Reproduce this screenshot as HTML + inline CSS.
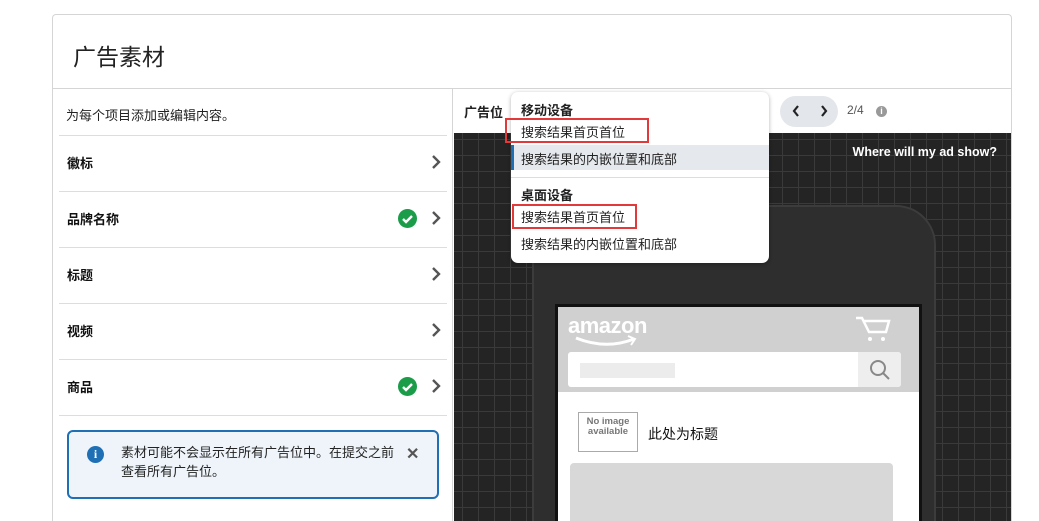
<!DOCTYPE html>
<html><head><meta charset="utf-8"><style>
*{margin:0;padding:0;box-sizing:border-box}
html,body{width:1039px;height:521px;overflow:hidden}
body{background:#fff;font-family:"Liberation Sans","Noto Sans CJK SC",sans-serif;position:relative;color:#111}
.card{position:absolute;left:52px;top:14px;width:960px;height:507px;background:#fff;border:1px solid #d5d5d5;border-bottom:none;border-radius:4px 4px 0 0;overflow:hidden}
.hdr{position:absolute;left:0;top:0;width:958px;height:74px;border-bottom:1px solid #d5d5d5}
.hdr span{position:absolute;left:20px;top:23px;font-size:23px;color:#222}
.lp{position:absolute;left:0;top:74px;width:400px;height:450px;border-right:1px solid #d5d5d5}
.abs{position:absolute}
.row{position:absolute;left:6px;width:388px;height:56px;border-top:1px solid #ddd}
.row b{position:absolute;left:8px;top:17px;font-size:13px}
.chev{position:absolute;right:6px;top:18px}
.ok{position:absolute;right:30px;top:17px;width:19px;height:19px;border-radius:50%;background:#1a9c48}
.rp{position:absolute;left:401px;top:74px;width:557px;height:450px}
.dark{position:absolute;left:0;top:44px;width:557px;height:410px;background-color:#242424;background-image:linear-gradient(#3a3a3a 1px,transparent 1px),linear-gradient(90deg,#3a3a3a 1px,transparent 1px);background-size:16px 16px;background-position:8px 6px;overflow:hidden}
.menu{position:absolute;left:511px;top:92px;width:258px;height:171px;background:#fff;border-radius:7px;box-shadow:0 1px 4px rgba(0,0,0,.3);font-size:13px}
.menu div{position:absolute;left:10px}
.red{position:absolute;border:2px solid #e23a3a}
</style></head><body>
<div class="card">
 <div class="hdr"><span>广告素材</span></div>
 <div class="lp">
  <div class="abs" style="left:13px;top:16px;font-size:13px;color:#222">为每个项目添加或编辑内容。</div>
  <div class="row" style="top:46px"><b>徽标</b><svg class="chev" width="10" height="16"><path d="M2 2l6 6-6 6" stroke="#555" stroke-width="2.4" fill="none"/></svg></div>
  <div class="row" style="top:102px"><b>品牌名称</b><div class="ok"><svg width="19" height="19"><path d="M5 10l3 3 6-6" stroke="#fff" stroke-width="2.4" fill="none"/></svg></div><svg class="chev" width="10" height="16"><path d="M2 2l6 6-6 6" stroke="#555" stroke-width="2.4" fill="none"/></svg></div>
  <div class="row" style="top:158px"><b>标题</b><svg class="chev" width="10" height="16"><path d="M2 2l6 6-6 6" stroke="#555" stroke-width="2.4" fill="none"/></svg></div>
  <div class="row" style="top:214px"><b>视频</b><svg class="chev" width="10" height="16"><path d="M2 2l6 6-6 6" stroke="#555" stroke-width="2.4" fill="none"/></svg></div>
  <div class="row" style="top:270px"><b>商品</b><div class="ok"><svg width="19" height="19"><path d="M5 10l3 3 6-6" stroke="#fff" stroke-width="2.4" fill="none"/></svg></div><svg class="chev" width="10" height="16"><path d="M2 2l6 6-6 6" stroke="#555" stroke-width="2.4" fill="none"/></svg></div>
  <div class="row" style="top:326px;height:1px"></div>
  <div class="abs" style="left:14px;top:341px;width:372px;height:69px;background:#eef4fa;border:2px solid #1f6fb5;border-radius:6px">
   <div class="abs" style="left:18px;top:14px;width:17px;height:17px;border-radius:50%;background:#1f6fb5;color:#fff;font-size:12px;font-weight:bold;text-align:center;line-height:17px;font-family:'Liberation Serif',serif">i</div>
   <div class="abs" style="left:52px;top:11px;width:280px;font-size:13px;line-height:19px;color:#222">素材可能不会显示在所有广告位中。在提交之前查看所有广告位。</div>
   <div class="abs" style="left:337px;top:12px;font-size:16px;color:#555;font-weight:bold">✕</div>
  </div>
 </div>
 <div class="rp">
  <div class="abs" style="left:10px;top:13px;font-size:13px;font-weight:bold;color:#222">广告位</div>
  <div class="abs" style="left:326px;top:7px;width:58px;height:31px;background:#e3e6ea;border-radius:16px"></div>
  <svg class="abs" style="left:337px;top:15px" width="40" height="14"><path d="M7 2l-4 5 4 5M31 2l4 5-4 5" stroke="#222" stroke-width="2.2" fill="none"/></svg>
  <div class="abs" style="left:393px;top:14px;font-size:12px;color:#555">2/4</div>
  <div class="abs" style="left:422px;top:17px;width:11px;height:11px;border-radius:50%;background:#999;color:#fff;font-size:9px;text-align:center;line-height:11px;font-weight:bold">i</div>
  <div class="dark">
   <div class="abs" style="right:14px;top:12px;color:#fff;font-size:12.5px;font-weight:bold">Where will my ad show?</div>
   <div class="abs" style="left:78px;top:72px;width:404px;height:400px;background:#2e2e2e;border:2px solid #3c3c3c;border-radius:40px"></div>
   <div class="abs" style="left:101px;top:171px;width:367px;height:300px;background:#111"></div>
   <div class="abs" style="left:104px;top:174px;width:361px;height:300px;background:#fff">
    <div class="abs" style="left:0;top:0;width:361px;height:85px;background:#d0d0d0"></div>
    <div class="abs" style="left:10px;top:6px;color:#fff;font-size:22px;font-weight:bold;letter-spacing:-0.5px">amazon</div>
    <svg class="abs" style="left:16px;top:28px" width="80" height="14"><path d="M2 3q30 12 58 1" stroke="#fff" stroke-width="3" fill="none"/><path d="M54 1l7 3-4 6" stroke="#fff" stroke-width="2" fill="none"/></svg>
    <svg class="abs" style="left:296px;top:8px" width="40" height="28"><path d="M2 3h6l7 14h17l3-11H10" stroke="#fff" stroke-width="2.5" fill="none"/><circle cx="16" cy="24" r="2" fill="#fff"/><circle cx="29" cy="24" r="2" fill="#fff"/></svg>
    <div class="abs" style="left:10px;top:45px;width:333px;height:35px;background:#fff;border-radius:3px"></div>
    <div class="abs" style="left:22px;top:56px;width:95px;height:15px;background:#ececec"></div>
    <div class="abs" style="left:300px;top:45px;width:43px;height:35px;background:#eee;border-radius:0 3px 3px 0"></div>
    <svg class="abs" style="left:311px;top:52px" width="22" height="22"><circle cx="9" cy="9" r="7" stroke="#888" stroke-width="2" fill="none"/><path d="M14 14l6 6" stroke="#888" stroke-width="2"/></svg>
    <div class="abs" style="left:20px;top:105px;width:60px;height:40px;border:1px solid #aaa;color:#777;font-size:9.5px;font-weight:bold;text-align:center;line-height:10px;padding-top:4px">No image<br>available</div>
    <div class="abs" style="left:90px;top:117px;font-size:14px;color:#111">此处为标题</div>
    <div class="abs" style="left:12px;top:156px;width:323px;height:150px;background:#d8d8d8;border-radius:4px"></div>
   </div>
  </div>
 </div>
</div>
<div class="menu">
 <div style="top:8px;font-weight:bold;color:#222">移动设备</div>
 <div style="top:30px;color:#222">搜索结果首页首位</div>
 <div style="left:0;top:53px;width:258px;height:25px;background:#e5e8ec;border-left:3px solid #1f6fb5"></div>
 <div style="top:57px;color:#222">搜索结果的内嵌位置和底部</div>
 <div style="left:0;top:85px;width:258px;height:1px;background:#ddd"></div>
 <div style="top:93px;font-weight:bold;color:#222">桌面设备</div>
 <div style="top:115px;color:#222">搜索结果首页首位</div>
 <div style="top:142px;color:#222">搜索结果的内嵌位置和底部</div>
</div>
<div class="red" style="left:505px;top:118px;width:144px;height:25px"></div>
<div class="red" style="left:512px;top:204px;width:125px;height:25px"></div>
</body></html>
